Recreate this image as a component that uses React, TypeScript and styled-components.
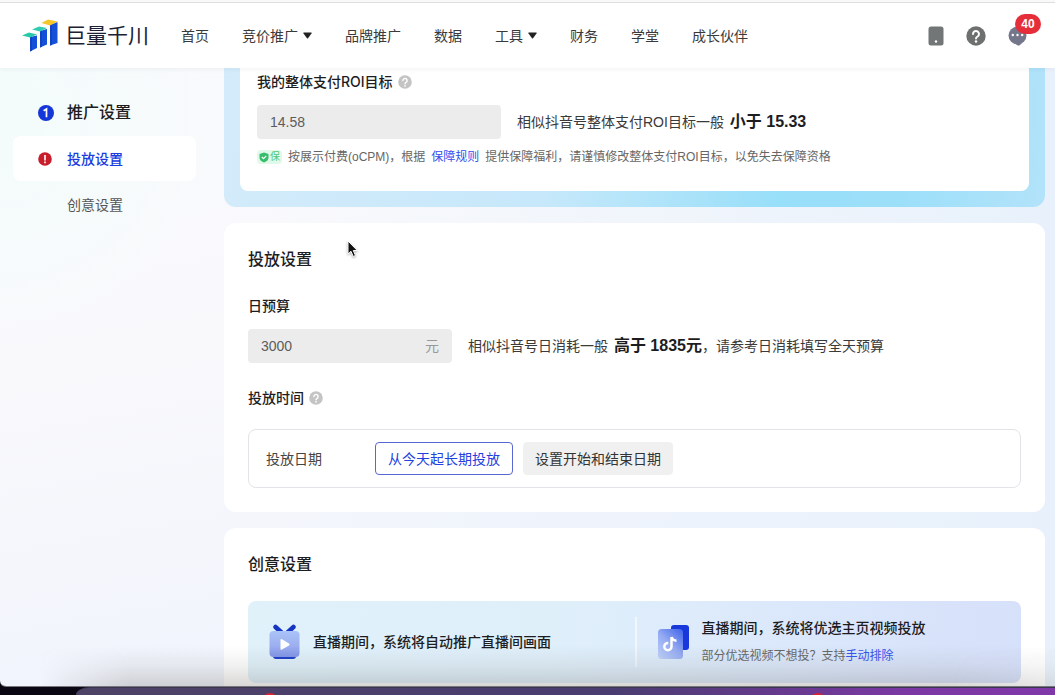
import React from "react";
import styled, { createGlobalStyle, css } from "styled-components";

const GlobalStyle = createGlobalStyle`
  *, *::before, *::after { box-sizing: border-box; }
  body {
    margin: 0;
    background: #0a0712;
    color: #333;
    font-family: "Liberation Sans", "Noto Sans CJK SC", sans-serif;
    font-size: 14px;
    line-height: 20px;
  }
  a { text-decoration: none; color: inherit; }
  h2, h3, p { margin: 0; }
  button, input { font: inherit; }
`;

const Page = styled.div`
  position: relative;
  min-height: 100vh;
  display: flex;
  flex-direction: column;
`;

const AppWindow = styled.div`
  position: relative;
  flex: 1;
  display: flex;
  flex-direction: column;
  overflow: hidden;
  border-bottom: 1px solid #77777c;
  border-bottom-left-radius: 6px;
  background: radial-gradient(circle at 0 18%, #f3fcfb 0, #f3fcfb00 220px),
    linear-gradient(to right, #e8f1fb00 25%, #e8f1fb 100%),
    linear-gradient(170deg, #f8fafc 0%, #f9f9fc 45%, #f4f6fb 65%, #f0f4fd 85%, #f0f5fd 100%);
`;

const BottomShade = styled.div`
  position: absolute;
  left: 0;
  right: 0;
  bottom: 0;
  height: 40px;
  pointer-events: none;
  background: linear-gradient(to bottom, #7f7d7800, #7f7d781c 50%, #7f7d784d);
  mask-image: linear-gradient(to right, transparent 40px, #000 130px, #000 90%, #0009);
`;

/* Header */
const Header = styled.header`
  position: relative;
  height: 68px;
  display: flex;
  align-items: center;
  padding: 3px 28px 0 22px;
  background: #fff;
  box-shadow: 0 1px 5px #1b28400f;

  &::before {
    content: "";
    position: absolute;
    inset: 0 0 auto;
    height: 3px;
    background: #f9f9f9;
    border-bottom: 1px solid #dedede;
  }
`;

const Brand = styled.a`
  display: flex;
  align-items: center;
  gap: 6px;
  color: #1c2233;
  font-size: 21px;
  line-height: 28px;
  white-space: nowrap;
`;

const TopNav = styled.nav`
  display: flex;
  gap: 33px;
  margin-left: 32px;
  flex: 1;
`;

const TopLink = styled.a`
  display: flex;
  align-items: center;
  gap: 5px;
  color: #3a3a3a;
  white-space: nowrap;
`;

const Tools = styled.div`
  display: flex;
  align-items: center;
  gap: 22px;
`;

const ToolButton = styled.button`
  position: relative;
  display: flex;
  padding: 0;
  border: 0;
  background: none;
`;

const Count = styled.span`
  position: absolute;
  left: 7px;
  top: -12px;
  width: 26px;
  height: 20px;
  border-radius: 10px;
  background: #e62e3a;
  color: #fff;
  font-size: 12px;
  font-weight: 700;
  line-height: 20px;
  text-align: center;
`;

/* Body */
const Body = styled.div`
  flex: 1;
  display: grid;
  grid-template-columns: 224px minmax(0, 1fr);
  padding-right: 10px;
`;

const Steps = styled.nav`
  display: flex;
  flex-direction: column;
  gap: 1px;
  padding: 22px 28px 0 13px;
`;

const Step = styled.a<{ $active?: boolean; $heading?: boolean }>`
  display: grid;
  grid-template-columns: 16px auto;
  justify-content: start;
  align-items: center;
  gap: 13px;
  height: 45px;
  padding-left: 25px;
  border-radius: 8px;
  color: #555;
  ${(p) => p.$heading && css`color: #1d1d1f; font-size: 16px; font-weight: 500;`}
  ${(p) => p.$active && css`background: #fff; color: #1a3be0; font-weight: 500;`}
`;

const Main = styled.main`
  display: flex;
  flex-direction: column;
  gap: 16px;
`;

const BlueFrame = styled.section`
  padding: 0 16px 16px;
  border-radius: 0 0 12px 12px;
  background: linear-gradient(95deg, #d3ebfa 0%, #c6e8fa 40%, #98dff9 68%, #9cdff9 82%, #b2e3fa 100%);
`;

const BlueInner = styled.div`
  padding: 4px 17px 26px;
  border-radius: 0 0 8px 8px;
  background: #fff;
`;

const Card = styled.section<{ $open?: boolean }>`
  padding: 24px;
  border-radius: 12px;
  background: #fff;
  ${(p) => p.$open && css`
    flex: 1;
    padding-bottom: 3px;
    border-radius: 12px 12px 0 0;
  `}
`;

const CardTitle = styled.h2`
  margin-bottom: 23px;
  color: #1d1d1f;
  font-size: 16px;
  font-weight: 500;
  line-height: 26px;
`;

const fieldTitle = css`
  display: flex;
  align-items: center;
  gap: 5px;
  color: #1d1d1f;
  font-family: Inter, "Noto Sans CJK SC", sans-serif;
  font-size: 14px;
  font-weight: 500;
`;

const FieldLabel = styled.label`
  ${fieldTitle}
  margin-bottom: 13px;
`;

const FieldHeading = styled.h3`
  ${fieldTitle}
  margin-top: 25px;
`;

const Row = styled.div`
  display: flex;
  align-items: center;
  gap: 16px;
`;

const InputBox = styled.div<{ $width: number }>`
  display: flex;
  align-items: center;
  width: ${(p) => p.$width}px;
  height: 34px;
  padding: 0 13px;
  border-radius: 4px;
  background: #ececec;
  color: #999;
`;

const TextInput = styled.input`
  flex: 1;
  min-width: 0;
  padding: 0;
  border: 0;
  outline: 0;
  background: none;
  color: #5c5c5c;
`;

const Hint = styled.p`
  color: #3a3a3a;

  strong {
    margin-left: 2px;
    color: #1d1d1f;
    font-size: 16px;
    font-weight: 700;
  }
`;

const Guarantee = styled.p`
  display: flex;
  align-items: center;
  gap: 6px;
  margin-top: 10px;
  color: #666;
  font-size: 12px;
  line-height: 16px;
`;

const Shield = styled.span`
  display: flex;
  align-items: center;
  gap: 1px;
  padding: 0 2px;
  height: 14px;
  border-radius: 4px;
  background: #e0f9e8;
  color: #4fc77e;
  font-size: 10px;
  line-height: 14px;
`;

const InlineLink = styled.a`
  color: #3351ee;
`;

const DateBox = styled.div`
  display: flex;
  align-items: center;
  gap: 10px;
  margin-top: 21px;
  padding: 12px 17px;
  border: 1px solid #e3e4e8;
  border-radius: 8px;
`;

const DateLabel = styled.span`
  width: 99px;
  color: #444;
`;

const Choice = styled.button<{ $selected?: boolean }>`
  height: 33px;
  padding: 0 11px;
  border: 1px solid #f0f0f1;
  border-radius: 4px;
  background: #f0f0f1;
  color: #333;
  white-space: nowrap;
  ${(p) => p.$selected && css`
    padding: 0 12px;
    border-color: #5a66d2;
    background: #fff;
    color: #2441e0;
  `}
`;

const Banner = styled.div`
  display: grid;
  grid-template-columns: 1fr 1fr;
  height: 82px;
  align-items: center;
  border-radius: 8px;
  background: linear-gradient(100deg, #e0f1fa 0%, #dfeffa 40%, #dce9fb 65%, #d6e0fa 100%);
`;

const BannerItem = styled.div<{ $divided?: boolean }>`
  display: flex;
  align-items: center;
  gap: 13px;
  height: 50px;
  padding-left: 21px;
  ${(p) => p.$divided && css`border-left: 2px solid #f1f7fd;`}
`;

const BannerTitle = styled.h3`
  color: #1d1d1f;
  font-size: 14px;
  font-weight: 500;
  line-height: 28px;
`;

const BannerNote = styled.p`
  color: #666;
  font-size: 12px;
  line-height: 28px;
`;

/* Desktop strip under the window */
const Dock = styled.footer`
  height: 8px;
  padding-left: 76px;
  background: #0a0712;
`;

const DockBar = styled.div`
  position: relative;
  height: 8px;
  overflow: hidden;
  border-top: 1px solid #3b3550;
  border-top-left-radius: 14px 8px;
  background: linear-gradient(to right, #4c4265 0%, #4a3c70 55%, #7b38a4 85%, #8038a8 100%);
`;

const DockDot = styled.span<{ $left: string }>`
  position: absolute;
  left: ${(p) => p.$left};
  top: 5px;
  width: 16px;
  height: 16px;
  border-radius: 50%;
  background: #d92332;
`;

const Pointer = styled.svg`
  position: absolute;
  left: 346px;
  top: 239px;
  pointer-events: none;
  filter: drop-shadow(0 1px 1px #0005);
`;

const LogoMark = () => (
  <svg width="37" height="34" viewBox="0 0 37 34" aria-hidden="true">
    <path d="M8 18 15 16.5V29L8 32.500Z" fill="#1550d8" />
    <path d="M18 12 25 10V25.500L18 28.500Z" fill="#1550d8" />
    <path d="M28 6 35.500 3V24L28 26.500Z" fill="#1550d8" />
    <path d="M8 18 10 17.500V31.500L8 32.500ZM18 12 20 11.500V27.700L18 28.500ZM28 6 30 5.200V25.900L28 26.500Z" fill="#0f43c4" />
    <path d="M0 16.500 7 13.500 15 15.500 8 18.500Z" fill="#27c9a8" />
    <path d="M10 10.500 17 7.500 25 9 18 12.500Z" fill="#2fcdb0" />
    <path d="M19.500 4 26 .5 35.500 2.500 28 6.500Z" fill="#f5c62c" />
  </svg>
);

const Caret = () => (
  <svg width="9" height="7" viewBox="0 0 9 7" aria-hidden="true">
    <path d="M.8.500H8.200Q9 .6 8.500 1.400L5 6.200Q4.500 6.800 4 6.200L.5 1.400Q0 .6.8.500Z" fill="#222" />
  </svg>
);

const HelpIcon = ({ size, color }: { size: number; color: string }) => (
  <svg width={size} height={size} viewBox="0 0 20 20" aria-hidden="true">
    <circle cx="10" cy="10" r="9.700" fill={color} />
    <path d="M7 8a3 3 0 1 1 4.600 2.500Q10 11.400 10 12.600" fill="none" stroke="#fff" strokeWidth="2" strokeLinecap="round" />
    <circle cx="10" cy="15.400" r="1.250" fill="#fff" />
  </svg>
);

const TabletIcon = () => (
  <svg width="16" height="20" viewBox="0 0 16 20" aria-hidden="true">
    <rect x=".5" y=".5" width="15" height="19" rx="2.500" fill="#737676" />
    <circle cx="8" cy="15.500" r="1.200" fill="#fff" />
  </svg>
);

const ChatIcon = () => (
  <svg width="19" height="20" viewBox="0 0 19 20" aria-hidden="true">
    <circle cx="9.500" cy="9.500" r="9" fill="#74778b" />
    <path d="M7 17.500H14L11.500 19.300Q10.500 20 9.500 19.300Z" fill="#74778b" />
    <circle cx="4.800" cy="9" r="1.200" fill="#fff" />
    <circle cx="9.500" cy="9" r="1.200" fill="#fff" />
    <circle cx="14.200" cy="9" r="1.200" fill="#fff" />
  </svg>
);

const StepOne = () => (
  <svg width="16" height="16" viewBox="0 0 16 16" aria-hidden="true">
    <circle cx="8" cy="8" r="8" fill="#1637d8" />
    <path d="M5.600 5.800 8.500 4V12.300" fill="none" stroke="#fff" strokeWidth="1.700" />
  </svg>
);

const StepAlert = () => (
  <svg width="14" height="14" viewBox="0 0 14 14" aria-hidden="true">
    <circle cx="7" cy="7" r="6.800" fill="#c81e2b" />
    <path d="M7 3V8.600M7 9.600V11.300" stroke="#fff" strokeWidth="1.600" />
  </svg>
);

const ShieldIcon = () => (
  <svg width="10" height="11" viewBox="0 0 10 11" aria-hidden="true">
    <path d="M5 .5 9.500 2V5.500Q9.500 8.900 5 10.500.5 8.900.5 5.500V2Z" fill="#35bd6c" />
    <path d="M2.800 5 4.500 6.700 7.300 3.900" fill="none" stroke="#fff" strokeWidth="1.200" />
  </svg>
);

const LiveIcon = () => (
  <svg width="31" height="36" viewBox="0 0 31 36" aria-hidden="true">
    <defs>
      <linearGradient id="live" x1="0" y1="0" x2="0" y2="1">
        <stop offset="0" stopColor="#a9c3f7" />
        <stop offset=".6" stopColor="#9caef0" />
        <stop offset="1" stopColor="#7f92e8" />
      </linearGradient>
    </defs>
    <path d="M6.500 3 12.500 8.500M24.500 3 18.500 8.500" stroke="#1735c4" strokeWidth="4.500" strokeLinecap="round" />
    <rect x="4" y="26" width="23" height="9" rx="3" fill="#1a3bc8" />
    <rect x=".5" y="7" width="30" height="26" rx="4" fill="url(#live)" />
    <path d="M11.500 16Q11.500 14.500 13 15.300L20 19.500Q21.200 20.500 20 21.500L13 25.500Q11.500 26.200 11.500 25Z" fill="#fff" />
  </svg>
);

const VideoIcon = () => (
  <svg width="31" height="36" viewBox="0 0 31 36" aria-hidden="true">
    <defs>
      <linearGradient id="video" x1=".9" y1="0" x2=".1" y2="1">
        <stop offset="0" stopColor="#4669ea" />
        <stop offset=".5" stopColor="#94aaf2" />
        <stop offset="1" stopColor="#bdcff9" />
      </linearGradient>
    </defs>
    <rect x="13" y="1" width="18" height="25" rx="3" fill="#1838dc" />
    <rect x="0" y="5" width="25" height="30" rx="3.500" fill="url(#video)" />
    <path d="M13.500 13V22.500A3.600 3.600 0 1 1 10.300 19M13.500 13Q14.500 16.500 18.500 16.800" fill="none" stroke="#fff" strokeWidth="2.500" />
  </svg>
);

const topLinks = [
  { label: "首页" },
  { label: "竞价推广", menu: true },
  { label: "品牌推广" },
  { label: "数据" },
  { label: "工具", menu: true },
  { label: "财务" },
  { label: "学堂" },
  { label: "成长伙伴" },
];

export default function App() {
  return (
    <Page>
      <GlobalStyle />
      <AppWindow>
        <Header>
          <Brand href="#">
            <LogoMark />
            <span>巨量千川</span>
          </Brand>
          <TopNav>
            {topLinks.map((link) => (
              <TopLink key={link.label} href="#">
                {link.label}
                {link.menu && <Caret />}
              </TopLink>
            ))}
          </TopNav>
          <Tools>
            <ToolButton aria-label="移动端"><TabletIcon /></ToolButton>
            <ToolButton aria-label="帮助"><HelpIcon size={20} color="#6e7070" /></ToolButton>
            <ToolButton aria-label="消息">
              <ChatIcon />
              <Count>40</Count>
            </ToolButton>
          </Tools>
        </Header>

        <Body>
          <Steps>
            <Step href="#promotion" $heading><StepOne /><span>推广设置</span></Step>
            <Step href="#delivery" $active><StepAlert /><span>投放设置</span></Step>
            <Step href="#creative"><span /><span>创意设置</span></Step>
          </Steps>

          <Main>
            <BlueFrame id="promotion">
              <BlueInner>
                <FieldLabel htmlFor="roi">
                  我的整体支付ROI目标 <HelpIcon size={14} color="#c4c4c4" />
                </FieldLabel>
                <Row>
                  <InputBox $width={244}>
                    <TextInput id="roi" defaultValue="14.58" />
                  </InputBox>
                  <Hint>相似抖音号整体支付ROI目标一般 <strong>小于 15.33</strong></Hint>
                </Row>
                <Guarantee>
                  <Shield><ShieldIcon />保</Shield>
                  <span>按展示付费(oCPM)，根据</span>
                  <InlineLink href="#">保障规则</InlineLink>
                  <span>提供保障福利，请谨慎修改整体支付ROI目标，以免失去保障资格</span>
                </Guarantee>
              </BlueInner>
            </BlueFrame>

            <Card id="delivery">
              <CardTitle>投放设置</CardTitle>
              <FieldLabel htmlFor="budget">日预算</FieldLabel>
              <Row>
                <InputBox $width={204}>
                  <TextInput id="budget" defaultValue="3000" />
                  <span>元</span>
                </InputBox>
                <Hint>相似抖音号日消耗一般 <strong>高于 1835元</strong>，请参考日消耗填写全天预算</Hint>
              </Row>
              <FieldHeading>
                投放时间 <HelpIcon size={14} color="#c4c4c4" />
              </FieldHeading>
              <DateBox>
                <DateLabel>投放日期</DateLabel>
                <Choice $selected>从今天起长期投放</Choice>
                <Choice>设置开始和结束日期</Choice>
              </DateBox>
            </Card>

            <Card id="creative" $open>
              <CardTitle>创意设置</CardTitle>
              <Banner>
                <BannerItem>
                  <LiveIcon />
                  <BannerTitle>直播期间，系统将自动推广直播间画面</BannerTitle>
                </BannerItem>
                <BannerItem $divided>
                  <VideoIcon />
                  <div>
                    <BannerTitle>直播期间，系统将优选主页视频投放</BannerTitle>
                    <BannerNote>部分优选视频不想投？支持<InlineLink href="#">手动排除</InlineLink></BannerNote>
                  </div>
                </BannerItem>
              </Banner>
            </Card>
          </Main>
        </Body>
        <BottomShade />
      </AppWindow>
      <Dock>
        <DockBar>
          <DockDot $left="19%" />
          <DockDot $left="75%" />
        </DockBar>
      </Dock>
      <Pointer width="14" height="20" viewBox="0 0 14 20" aria-hidden="true">
        <path d="M2 2V15L5 12.300 7.200 17.500 9.500 16.500 7.300 11.500H11.300Z" fill="#111" stroke="#fff" strokeWidth="1" />
      </Pointer>
    </Page>
  );
}
